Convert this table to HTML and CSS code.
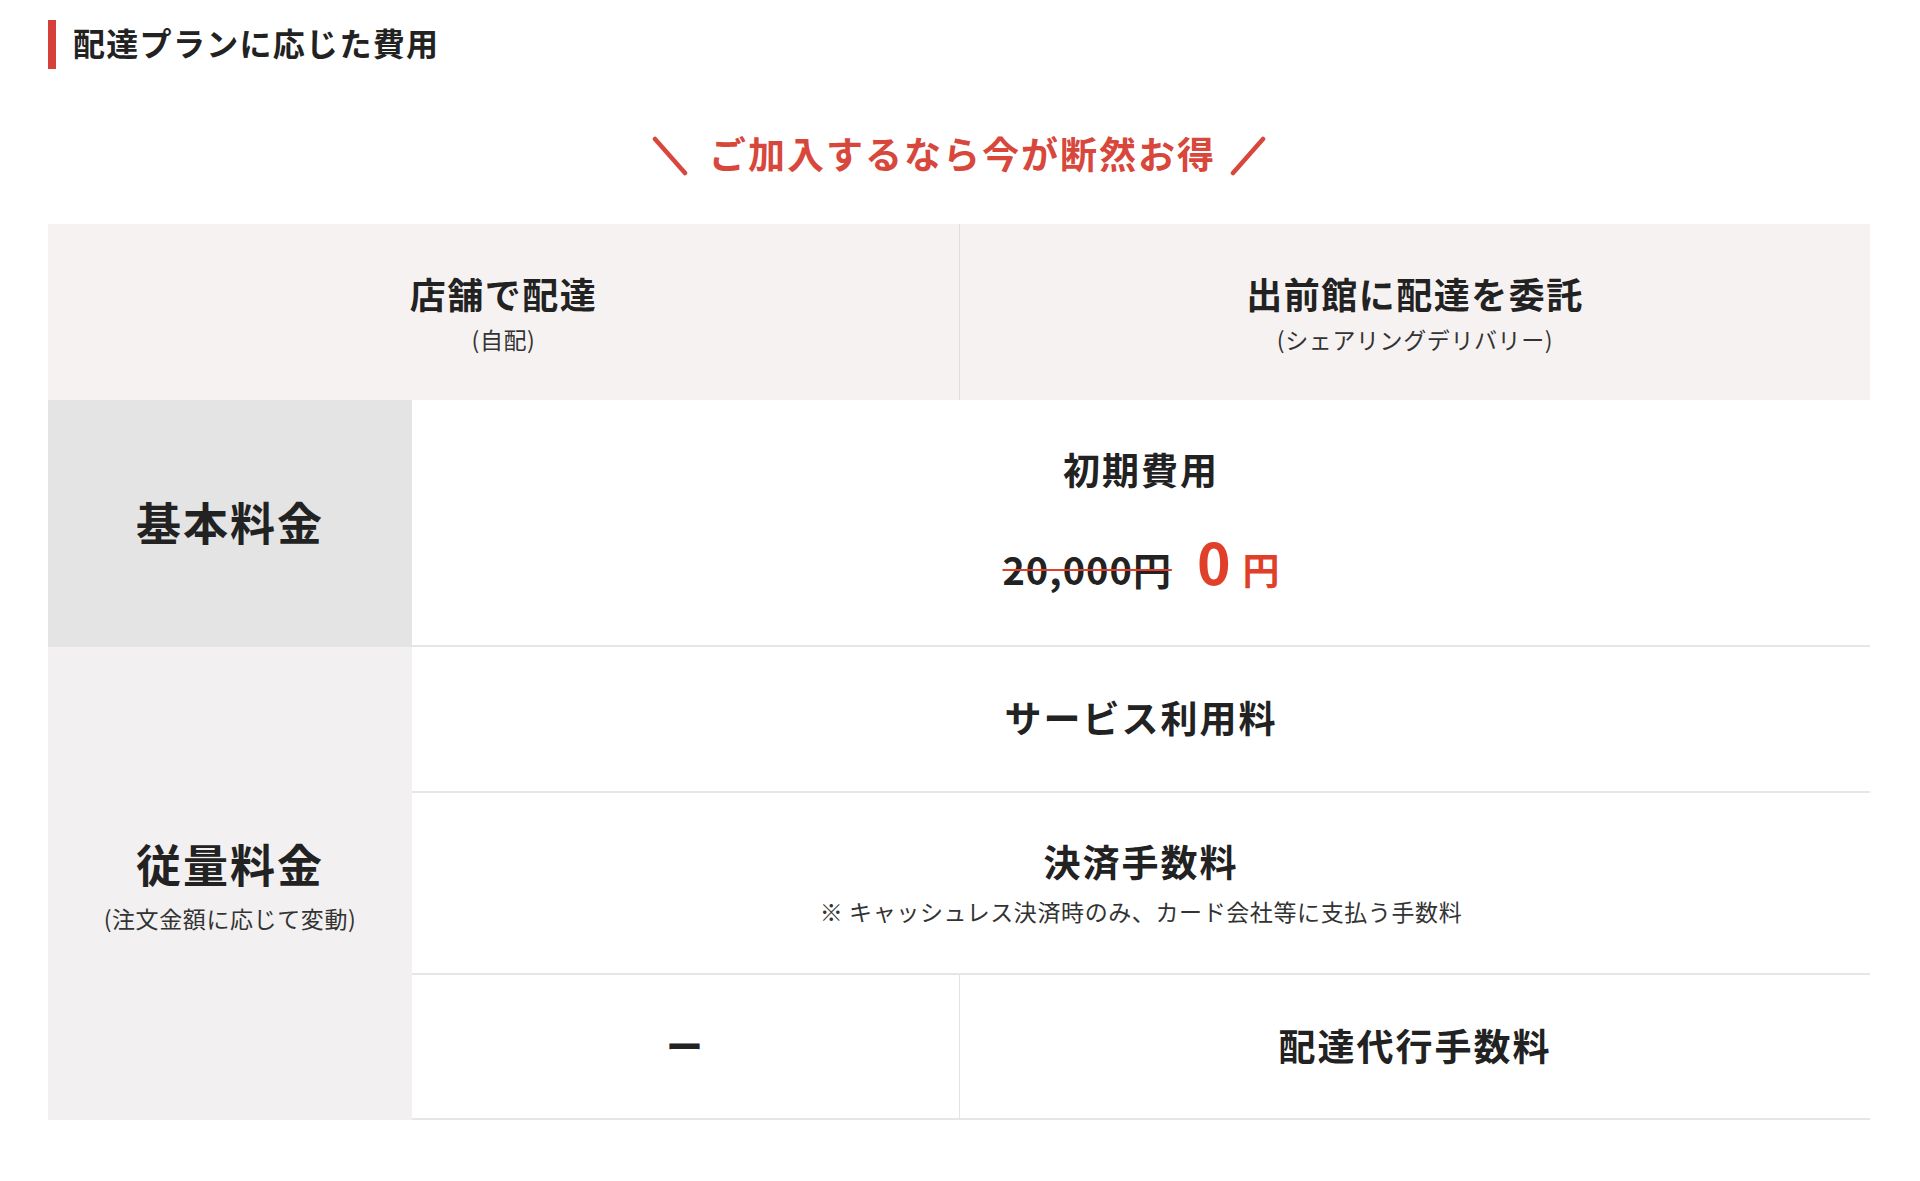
FILE: index.html
```html
<!DOCTYPE html>
<html lang="ja">
<head>
<meta charset="utf-8">
<title>配達プランに応じた費用</title>
<link rel="stylesheet" href="styles.css">
</head>
<body>
<section class="plan">
  <h2 class="sec-title"><span class="sec-title-text">配達プランに応じた費用</span></h2>
  <p class="catch"><svg class="slash slash-left" width="36" height="40" viewBox="0 0 36 40" aria-hidden="true"><line x1="3" y1="3" x2="33" y2="37" stroke="#d8473c" stroke-width="4.5" stroke-linecap="round"/></svg>ご加入するなら今が断然お得<svg class="slash slash-right" width="36" height="40" viewBox="0 0 36 40" aria-hidden="true"><line x1="33" y1="3" x2="3" y2="37" stroke="#d8473c" stroke-width="4.5" stroke-linecap="round"/></svg></p>
  <div class="fee-table">
    <div class="th th-self">
      <div class="th-main">店舗で配達</div>
      <div class="th-sub">(自配)</div>
    </div>
    <div class="th th-share">
      <div class="th-main">出前館に配達を委託</div>
      <div class="th-sub">(シェアリングデリバリー)</div>
    </div>

    <div class="label label-base">
      <div class="label-main">基本料金</div>
    </div>
    <div class="cell cell-initial">
      <div class="cell-main">初期費用</div>
      <div class="price">
        <span class="price-old">20,000円</span>
        <span class="price-new"><span class="num">0</span><span class="yen">円</span></span>
      </div>
    </div>

    <div class="label label-usage">
      <div class="label-main">従量料金</div>
      <div class="label-sub">(注文金額に応じて変動)</div>
    </div>
    <div class="cell cell-service">
      <div class="cell-main">サービス利用料</div>
    </div>
    <div class="cell cell-payment">
      <div class="cell-main">決済手数料</div>
      <div class="cell-note">※ キャッシュレス決済時のみ、カード会社等に支払う手数料</div>
    </div>
    <div class="cell cell-dash">
      <div class="cell-main">ー</div>
    </div>
    <div class="cell cell-delivery">
      <div class="cell-main">配達代行手数料</div>
    </div>
  </div>
</section>
</body>
</html>
```

FILE: styles.css
```css
* { box-sizing: border-box; }

html, body {
  margin: 0;
  padding: 0;
  background: #ffffff;
}

body {
  font-family: "Noto Sans CJK JP", "Noto Sans", sans-serif;
  color: #222222;
}

.plan {
  padding: 20px 50px 0 48px;
}

.sec-title {
  margin: 0;
  border-left: 8px solid #d6403a;
  padding-left: 17px;
  height: 49px;
  display: flex;
  align-items: center;
  font-size: 32px;
  font-weight: 700;
  letter-spacing: 1.3px;
  color: #222222;
}

.sec-title-text {
  line-height: 40px;
  margin-top: -5px;
}

.catch {
  margin: 58px 0 45px;
  text-align: center;
  font-size: 37px;
  line-height: 52px;
  font-weight: 700;
  letter-spacing: 2px;
  color: #d8473c;
}

.catch .slash {
  display: inline-block;
  vertical-align: -7px;
}

.catch .slash-left { margin-right: 21px; }
.catch .slash-right { margin-left: 14px; }

.fee-table {
  display: grid;
  grid-template-columns: 364px 547px 1fr;
  grid-template-rows: 176px 247px 146px 182px 145px;
}

.th {
  background: #f7f2f2;
  display: flex;
  flex-direction: column;
  align-items: center;
  justify-content: center;
  text-align: center;
  padding-bottom: 3px;
}

.th-self { grid-column: 1 / 3; grid-row: 1; }
.th-share { grid-column: 3; grid-row: 1; border-left: 1px solid #e3dede; }

.th-main {
  font-size: 36px;
  line-height: 50px;
  font-weight: 700;
  letter-spacing: 1.5px;
}

.th-sub {
  margin-top: 6px;
  font-size: 23px;
  line-height: 30px;
  letter-spacing: 0.6px;
  color: #333333;
}

.label {
  display: flex;
  flex-direction: column;
  align-items: center;
  justify-content: center;
  text-align: center;
}

.label-base { grid-column: 1; grid-row: 2; background: #e4e4e4; padding-bottom: 3px; }
.label-usage { grid-column: 1; grid-row: 3 / 6; background: #f2f0f0; padding-bottom: 1px; }

.label-main {
  font-size: 45px;
  line-height: 60px;
  font-weight: 700;
  letter-spacing: 2px;
}

.label-sub {
  margin-top: 9px;
  font-size: 23px;
  line-height: 30px;
  letter-spacing: 0.6px;
  color: #333333;
}

.cell {
  background: #ffffff;
  border-bottom: 2px solid #e6e6e6;
  display: flex;
  flex-direction: column;
  align-items: center;
  justify-content: center;
  text-align: center;
}

.cell-initial { grid-column: 2 / 4; grid-row: 2; padding-top: 5px; }
.cell-service { grid-column: 2 / 4; grid-row: 3; padding-bottom: 4px; }
.cell-payment { grid-column: 2 / 4; grid-row: 4; padding-bottom: 5px; }
.cell-dash { grid-column: 2; grid-row: 5; padding-bottom: 3px; }
.cell-delivery { grid-column: 3; grid-row: 5; border-left: 1px solid #e3e3e3; padding-bottom: 3px; }

.cell-main {
  font-size: 37px;
  line-height: 52px;
  font-weight: 700;
  letter-spacing: 2px;
}

.cell-note {
  margin-top: 9px;
  font-size: 23px;
  line-height: 30px;
  letter-spacing: 0.6px;
  color: #333333;
}

.price {
  margin-top: 35px;
  display: flex;
  align-items: baseline;
  justify-content: center;
  line-height: 60px;
}

.price-old {
  font-size: 38px;
  font-weight: 700;
  letter-spacing: 1px;
  text-decoration: line-through;
  text-decoration-color: #e0402a;
  text-decoration-thickness: 2px;
  color: #222222;
}

.price-new {
  margin-left: 25px;
  color: #e0402a;
  font-weight: 700;
}

.price-new .num {
  font-size: 57px;
}

.price-new .yen {
  margin-left: 12px;
  font-size: 37px;
  font-weight: 700;
}
```
